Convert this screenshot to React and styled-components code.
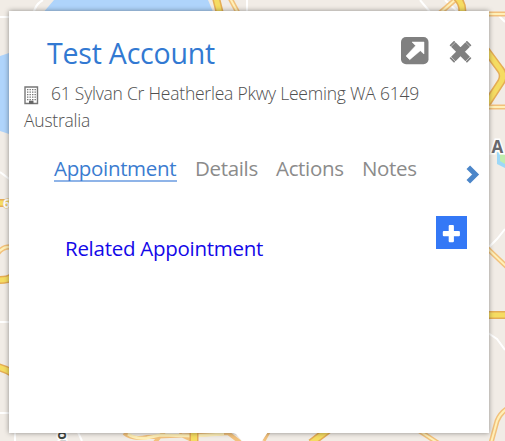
import React from 'react';
import styled, { createGlobalStyle } from 'styled-components';

const Global = createGlobalStyle`
  * { box-sizing: border-box; }
  body { margin: 0; overflow: hidden; font-family: "Open Sans", "Noto Sans", sans-serif; }
`;

const Viewport = styled.main`
  position: relative;
  width: 505px;
  height: 441px;
  padding: 11px 16px 8px 9px;
  overflow: hidden;
  background: #f1ece6;
`;

const MapLayer = styled.svg`
  position: absolute;
  inset: 0;
`;

const Card = styled.section`
  position: relative;
  width: 480px;
  height: 422px;
  padding: 22px 9px 0 15px;
  background: #fff;
  box-shadow: 0 0 5px rgba(0, 0, 0, 0.42);
`;

const Tail = styled.svg`
  position: absolute;
  left: 221px;
  top: 421px;
`;

const Header = styled.header`
  display: flex;
  align-items: flex-start;
  height: 47px;
  padding: 0 8px 0 23px;
`;

const Title = styled.h1`
  flex: 1;
  margin: 0;
  color: #3279d2;
  font-size: 28.5px;
  font-weight: 400;
  line-height: 41px;
  letter-spacing: -0.2px;
  white-space: nowrap;
`;

const IconButton = styled.button`
  display: block;
  padding: 0;
  border: 0;
  background: none;
  line-height: 0;
  margin: ${(p) => p.$margin || '0'};
`;

const Address = styled.address`
  color: #505050;
  font-size: 17.5px;
  font-style: normal;
  font-weight: 300;
  line-height: 27px;
  letter-spacing: -0.23px;
  white-space: nowrap;
`;

const AddressLine = styled.div`
  display: flex;
  gap: 12px;
  height: 27px;
`;

const BuildingIcon = styled.svg`
  flex: none;
  margin-top: 6px;
`;

const TabBar = styled.nav`
  display: flex;
  align-items: flex-start;
  height: 70px;
  padding: 20px 0 0 30px;
`;

const Tab = styled.a`
  flex: none;
  width: ${(p) => p.$width};
  height: 28px;
  margin-right: 18px;
  color: ${(p) => (p.$active ? '#3b7cd0' : '#8b8b8b')};
  border-bottom: 2px solid ${(p) => (p.$active ? '#8fb4e8' : 'transparent')};
  font-size: 20.5px;
  line-height: 29px;
  letter-spacing: -0.33px;
  white-space: nowrap;
`;

const Body = styled.div`
  display: flex;
  justify-content: space-between;
  padding: 12px 13px 0 41px;
`;

const Related = styled.h2`
  margin: 17px 0 0;
  color: #1408e8;
  font-size: 20.5px;
  font-weight: 400;
  line-height: 31px;
  letter-spacing: -0.27px;
  white-space: nowrap;
`;

const AddButton = styled.button`
  width: 31px;
  height: 33px;
  padding: 0;
  border: 0;
  background: #3478f6;
  line-height: 0;
`;

function Road({ d, w = 4, major }) {
  return (
    <>
      <path d={d} stroke={major ? '#e5ad55' : '#f2c17c'} strokeWidth={w + 3} />
      <path d={d} stroke={major ? '#f5dc62' : '#fff0b8'} strokeWidth={w} />
    </>
  );
}

function MapBackground() {
  return (
    <MapLayer width="505" height="441" viewBox="0 0 505 441" fill="none">
      <path d="M54 0H208L214 14H42Z" fill="#afd4fb" />
      <path d="M0 56L12 52V135L0 131Z" fill="#afd4fb" />
      <path d="M0 17H15M33 15Q35 4 43 0M0 172L12 181M0 322H12M0 413H12M15 430V441M77 430L82 441M247 0V12M420 0L430 12M445 0L458 12M499 16L505 22M488 248L497 239L505 229M488 333L497 339L505 350" stroke="#fff" strokeWidth="2" />
      <Road d="M216 -2L220 14" w={5} major />
      <Road d="M230 -2L238 13" w={2} />
      <Road d="M440 13L456 -1" w={2} />
      <Road d="M455 -4Q464 3 462 15" w={5} major />
      <Road d="M487 14H507" w={2} />
      <Road d="M486 50L500 69Q505 75 501 82L486 105" w={5} major />
      <Road d="M486 107H507" w={2} />
      <Road d="M0 203H12" w={5} major />
      <Road d="M-2 253Q3 246 12 247" w={2} />
      <Road d="M0 280Q8 280 12 277" w={5} major />
      <Road d="M-2 367Q6 369 12 373" w={5} major />
      <Road d="M487 248L507 267" w={2} />
      <Road d="M487 315H507" w={5} major />
      <Road d="M491 443L497 421Q500 413 508 408" w={2} />
      <path d="M124 433Q132 440 147 437L193 435L228 433L240 442M155 442L164 432M179 434L194 441" stroke="#f2c17c" strokeWidth="4" />
      <path d="M128 434Q135 439 147 438L160 435L193 436L224 434" stroke="#fff0b8" strokeWidth="3" />
      <Road d="M194 432V443" w={6} major />
      <Road d="M311 443L328 430" w={5} major />
      <Road d="M418 430L438 443" w={2} />
      <path d="M264 441L269 432" stroke="#f2c17c" strokeWidth="3" />
      <path d="M497 152L505 155V168L497 164Z" fill="#9dd8f7" />
      <path d="M500 153L505 155V164L500 161Z" fill="#c0edae" />
      <g fontFamily="Open Sans, sans-serif" fontWeight="700" paintOrder="stroke" stroke="#fff" strokeWidth="3">
        <text x="491.5" y="153" fontSize="17" fill="#68686d">A</text>
        <text x="3" y="208" fontSize="12" fill="#fff" stroke="#e9c570" strokeWidth="1">6</text>
        <text transform="translate(66 449) rotate(-90)" fontSize="14" fill="#424842">no</text>
      </g>
    </MapLayer>
  );
}

export default function App() {
  return (
    <>
      <Global />
      <Viewport>
        <MapBackground />
        <Card>
          <Header>
            <Title>Test Account</Title>
            <IconButton $margin="4px 20px 0 0" aria-label="Open account">
              <svg width="28" height="28" viewBox="0 0 28 28">
                <rect x="0" y="0" width="27.5" height="27.3" rx="5" fill="#808080" />
                <path d="M11 5H23V17L19.3 13.7L8.7 22.7L5 19L14.6 8.7Z" fill="#fff" stroke="#fff" strokeWidth="0.5" strokeLinejoin="round" />
              </svg>
            </IconButton>
            <IconButton $margin="8px 0 0" aria-label="Close">
              <svg width="23" height="22" viewBox="0 0 23 22">
                <path d="M4.3 3.6L18.7 18M18.7 3.6L4.3 18" stroke="#808080" strokeWidth="6.3" />
                <path d="M1.7 4.4L5.1 1M17.9 1L21.3 4.4M21.3 17.2L17.9 20.6M5.1 20.6L1.7 17.2" stroke="#808080" strokeWidth="1.8" strokeLinecap="round" />
              </svg>
            </IconButton>
          </Header>
          <AddressLine>
            <BuildingIcon width="15" height="19" viewBox="0 0 15 19">
              <path d="M1 1H13.5V17.5H1Z" fill="#fff" stroke="#777" strokeWidth="1.4" />
              <path d="M3 3.7H12M3 6.2H12M3 8.7H12M3 11.2H12M3 13.7H12" stroke="#777" strokeWidth="1.2" strokeDasharray="1.4 1.1" />
              <path d="M5 14.7H9.5V18H5Z" fill="#666" />
            </BuildingIcon>
            <Address>61 Sylvan Cr Heatherlea Pkwy Leeming WA 6149</Address>
          </AddressLine>
          <Address>Australia</Address>
          <TabBar>
            <Tab $active $width="123px">Appointment</Tab>
            <Tab $width="63px">Details</Tab>
            <Tab $width="68px">Actions</Tab>
            <Tab $width="55px">Notes</Tab>
            <IconButton $margin="11px 0 0 31px" aria-label="More tabs">
              <svg width="15" height="19" viewBox="0 0 15 19">
                <path d="M2.3 2.2L9.6 9.5L2.3 16.8" fill="none" stroke="#4c86c9" strokeWidth="5" />
              </svg>
            </IconButton>
          </TabBar>
          <Body>
            <Related>Related Appointment</Related>
            <AddButton aria-label="Add appointment">
              <svg width="31" height="33" viewBox="0 0 31 33">
                <path d="M15.3 10.3V25M8 17.6H22.7" stroke="#fff" strokeWidth="5.2" />
                <path d="M13.7 10.1H16.9M13.7 25.2H16.9M7.8 16V19.2M22.9 16V19.2" stroke="#fff" strokeWidth="2" strokeLinecap="round" />
              </svg>
            </AddButton>
          </Body>
          <Tail width="38" height="10" viewBox="0 0 38 10">
            <path d="M0 0H38L31 10H13L6 2Z" fill="#fff" />
          </Tail>
        </Card>
      </Viewport>
    </>
  );
}
